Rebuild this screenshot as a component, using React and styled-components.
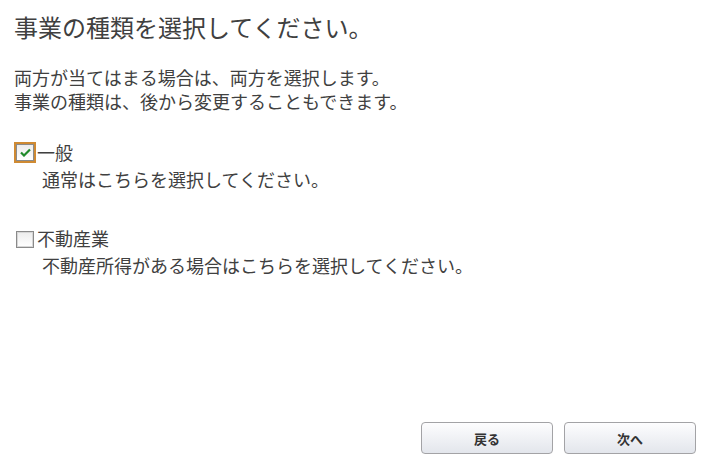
import React from 'react';
import styled, { createGlobalStyle } from 'styled-components';

const GlobalStyle = createGlobalStyle`
  html, body { margin: 0; padding: 0; background: #fff; }
  body { font-family: "Noto Sans CJK JP", "Noto Sans", sans-serif; color: #404040; }
`;

const Page = styled.div`
  display: flex;
  flex-direction: column;
  box-sizing: border-box;
  height: 100vh;
  padding: 12px 12px 11px 14px;
`;

const Title = styled.h1`
  margin: 0;
  font-size: 24px;
  font-weight: 400;
  line-height: 30px;
`;

const Lead = styled.p`
  margin: 23px 0 0;
  font-size: 18px;
  line-height: 24px;
`;

const Options = styled.div`
  display: flex;
  flex-direction: column;
  gap: 33px;
  margin-top: 26px;
`;

const Option = styled.div`
  display: flex;
  flex-direction: column;
  gap: 1px;
`;

const Label = styled.label`
  display: flex;
  align-items: center;
  gap: 3px;
  padding-left: 2px;
  font-size: 18px;
  line-height: 26px;
  cursor: pointer;
`;

const Box = styled.span`
  display: inline-flex;
  align-items: center;
  justify-content: center;
  box-sizing: border-box;
  width: 18px;
  height: 17px;
  margin-top: ${p => (p.$focused ? '1px' : '3px')};
  border: 1px solid #8a8a8a;
  background: linear-gradient(#ececec, #ffffff);
  box-shadow: ${p => (p.$focused ? '0 0 0 2px #cf8a33' : 'inset 0 0 0 1px #d6d6d6')};
`;

const Hint = styled.div`
  padding-left: 28px;
  font-size: 18px;
  line-height: 26px;
`;

const Footer = styled.div`
  display: flex;
  justify-content: flex-end;
  gap: 11px;
  margin-top: auto;
`;

const Button = styled.button`
  width: 132px;
  height: 32px;
  border: 1px solid #a3a3a6;
  border-radius: 4px;
  background: linear-gradient(#fdfdfe, #e3e6ec);
  color: #333;
  font-family: "Noto Sans CJK JP", sans-serif;
  font-size: 13px;
  font-weight: 700;
  cursor: pointer;
`;

const Check = () => (
  <svg width="11" height="9" viewBox="0 0 11 9">
    <polyline points="1,4.5 4,7.5 10,1.5" fill="none" stroke="#1f8a2a" strokeWidth="2.2" />
  </svg>
);

const options = [
  { name: '一般', hint: '通常はこちらを選択してください。', checked: true },
  { name: '不動産業', hint: '不動産所得がある場合はこちらを選択してください。', checked: false },
];

export default function App() {
  return (
    <>
      <GlobalStyle />
      <Page>
        <Title>事業の種類を選択してください。</Title>
        <Lead>
          両方が当てはまる場合は、両方を選択します。
          <br />
          事業の種類は、後から変更することもできます。
        </Lead>
        <Options>
          {options.map(o => (
            <Option key={o.name}>
              <Label>
                <Box $focused={o.checked}>{o.checked && <Check />}</Box>
                {o.name}
              </Label>
              <Hint>{o.hint}</Hint>
            </Option>
          ))}
        </Options>
        <Footer>
          <Button>戻る</Button>
          <Button>次へ</Button>
        </Footer>
      </Page>
    </>
  );
}
